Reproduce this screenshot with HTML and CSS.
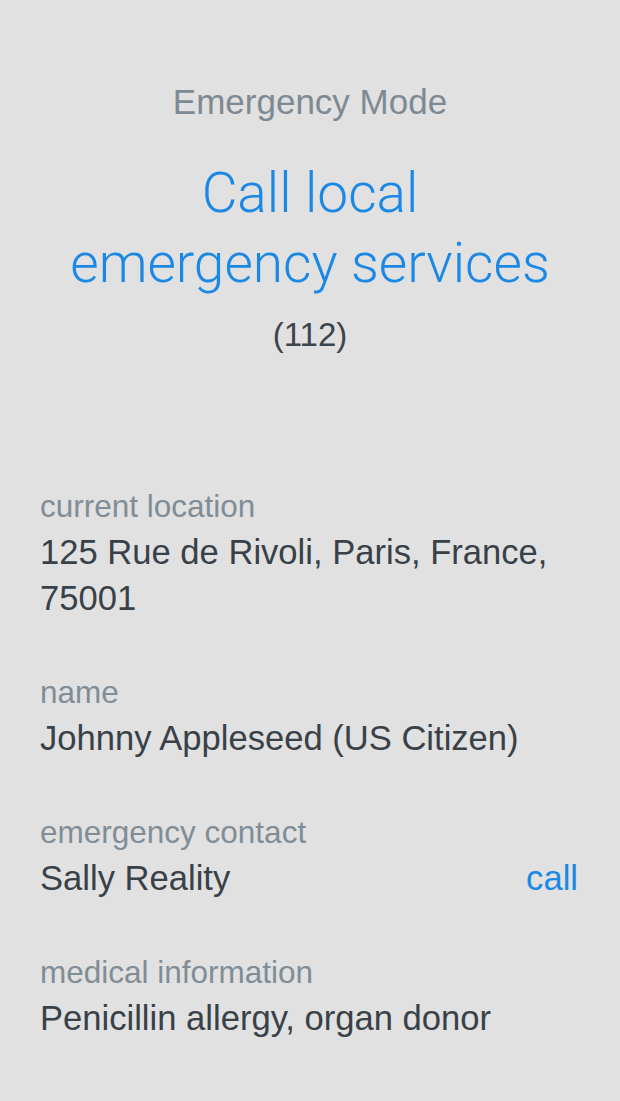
FILE: index.html
```html
<!DOCTYPE html>
<html lang="en">
<head>
<meta charset="utf-8">
<title>Emergency Mode</title>
<link rel="stylesheet" href="styles.css">
</head>
<body>
<main class="screen">
  <header class="top">
    <h1 class="mode">Emergency Mode</h1>
    <a class="call-services" href="#">Call local<br>emergency services</a>
    <p class="number">(112)</p>
  </header>
  <section class="info">
    <div class="field">
      <div class="label">current location</div>
      <div class="value">125 Rue de Rivoli, Paris, France,<br>75001</div>
    </div>
    <div class="field">
      <div class="label">name</div>
      <div class="value">Johnny Appleseed (US Citizen)</div>
    </div>
    <div class="field">
      <div class="label">emergency contact</div>
      <div class="value row">
        <span>Sally Reality</span>
        <a class="call" href="#">call</a>
      </div>
    </div>
    <div class="field">
      <div class="label">medical information</div>
      <div class="value">Penicillin allergy, organ donor</div>
    </div>
  </section>
</main>
</body>
</html>
```

FILE: styles.css
```css
html, body {
  margin: 0;
  padding: 0;
  background: #e1e1e1;
}
body {
  font-family: "Liberation Sans", Arial, sans-serif;
  width: 620px;
  height: 1101px;
  overflow: hidden;
}
.screen {
  display: flex;
  flex-direction: column;
}
.top {
  display: flex;
  flex-direction: column;
  align-items: center;
  padding-top: 82px;
  text-align: center;
}
.mode {
  margin: 0;
  font-size: 35px;
  line-height: 40px;
  font-weight: normal;
  color: #7d8a94;
}
.call-services {
  margin-top: 36px;
  font-family: Roboto, "Liberation Sans", sans-serif;
  font-weight: 300;
  font-size: 55px;
  line-height: 70px;
  color: #1b88e6;
  text-decoration: none;
}
.number {
  margin: 17px 0 0;
  font-size: 33px;
  line-height: 40px;
  color: #3d454c;
}
.info {
  display: flex;
  flex-direction: column;
  gap: 48px;
  padding: 128px 42px 0 40px;
}
.label {
  font-size: 31.5px;
  line-height: 46px;
  color: #808d97;
}
.value {
  font-size: 34.6px;
  line-height: 46px;
  color: #394148;
}
.row {
  display: flex;
  justify-content: space-between;
}
.call {
  color: #1b88e6;
  text-decoration: none;
}
```
